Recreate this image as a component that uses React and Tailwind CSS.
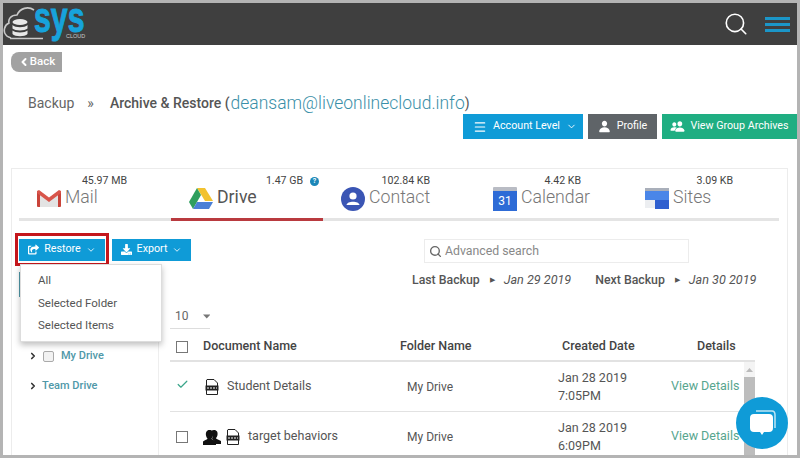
import React from 'react';
import { ChevronDown, ChevronLeft, ChevronRight, Menu, Search, Check } from 'lucide-react';
import { FaShareSquare, FaDownload } from 'react-icons/fa';
import { IoPerson, IoPeople } from 'react-icons/io5';

const font = { fontFamily: 'Roboto, sans-serif' };

const Logo = () => (
  <div className="relative h-full w-[90px]">
    <svg width="40" height="42" viewBox="0 0 40 42" fill="none" className="absolute left-0 top-0">
      <path d="M31 7 C25 3 17 5 14 12 C8 12 5 16 6 20 C1 22 0 29 3 32 C4 34 6 34 8 35" stroke="#c9c9c9" strokeWidth="1.6" />
      <path d="M7 35.500 H40" stroke="#c9c9c9" strokeWidth="1.6" />
      <ellipse cx="17" cy="19" rx="7.500" ry="3" fill="#e8e8e8" />
      <path d="M9.500 22 C12 25 22 25 24.500 22 V25.500 C22 28 12 28 9.500 25.500 Z" fill="#e8e8e8" />
      <path d="M9.500 27.500 C12 30 22 30 24.500 27.500 V31 C22 34 12 34 9.500 31 Z" fill="#e8e8e8" />
    </svg>
    <div className="absolute left-[31px] top-0 origin-left scale-x-[0.72] font-['Liberation_Sans',sans-serif] text-[42px] font-bold leading-[30px] text-[#17a3dc] [-webkit-text-stroke:1px_#17a3dc]">sys</div>
    <div className="absolute left-[63px] top-[30px] font-['Liberation_Sans',sans-serif] text-[5.5px] leading-[6px] text-[#c9c9c9]">CLOUD</div>
  </div>
);

const GmailIcon = () => (
  <svg width="24" height="17" viewBox="0 0 24 17" className="mt-[3px]">
    <path d="M0 1 H3 V17 H1 Q0 17 0 16 Z" fill="#c9433a" />
    <path d="M21 1 H24 V16 Q24 17 23 17 H21 Z" fill="#c9433a" />
    <path d="M3 3 L12 10 L21 3 V17 H3 Z" fill="#e3e3e3" />
    <path d="M0 1 L2 0 L12 7.500 L22 0 L24 1 V3 L12 12 L0 3 Z" fill="#d8554b" />
  </svg>
);

const DriveIcon = () => (
  <svg width="24" height="21" viewBox="0 0 24 21" className="mt-[1px]">
    <path d="M8 0 H16 L24 13 H16 Z" fill="#f2c230" />
    <path d="M8 0 L12 7 L4 21 L0 14 Z" fill="#2f9e5d" />
    <path d="M8 14 H24 L20 21 H4 Z" fill="#4a7fd6" />
  </svg>
);

const ContactIcon = () => (
  <svg width="24" height="24" viewBox="0 0 24 24">
    <circle cx="12" cy="12" r="12" fill="#3a55b4" />
    <circle cx="12" cy="9" r="3.600" fill="#fff" />
    <path d="M5.500 18 C6 13.500 18 13.500 18.500 18 Z" fill="#fff" />
  </svg>
);

const CalendarIcon = () => (
  <div className="flex h-[24px] w-[24px] flex-col">
    <div className="h-[4px] rounded-t-[1px] bg-[#b9bcc4]" />
    <div className="flex flex-1 items-center justify-center bg-[#2e6bd6] text-[12px] leading-none text-white">31</div>
  </div>
);

const SitesIcon = () => (
  <svg width="24" height="21" viewBox="0 0 24 21" className="mt-[1px]">
    <rect width="24" height="3" fill="#a9afba" />
    <rect y="3" width="24" height="9" fill="#4a86e8" />
    <rect x="10" y="12" width="14" height="9" fill="#2f5fcf" />
    <rect y="12" width="10" height="8" fill="#eceef1" />
  </svg>
);

const FileIcon = () => (
  <svg width="14" height="16" viewBox="0 0 14 16" className="shrink-0">
    <path d="M2 .5 H9 L12.500 4 V15.500 H1.500 V1 Z" fill="#fff" stroke="#222" />
    <rect x=".5" y="6.500" width="13" height="5" fill="#222" />
    <path d="M2 9 H12" stroke="#fff" strokeDasharray="2 1" />
  </svg>
);

// two overlapping black silhouettes, the shared-file marker
const SharedIcon = () => (
  <svg width="18" height="16" viewBox="0 0 18 16" className="-ml-[2px] shrink-0">
    <path d="M11 1 C14 1 15 3.500 14.500 6 C14.200 7.500 13.500 8.500 13 9 C13 10 15 10.500 18 12 V15 H13 C12.500 12 10 11 9 10 C10 8 10 3 8 2 C9 1.300 10 1 11 1 Z" fill="#111" />
    <path d="M6.500 1 C9.500 1 10.500 3.500 10 6.500 C9.700 8 9 9 8.500 9.500 C8.500 10.500 11 11 13 12.500 V16 H0 V12.500 C2 11 4.500 10.500 4.500 9.500 C4 9 3.300 8 3 6.500 C2.500 3.500 3.500 1 6.500 1 Z" fill="#111" />
  </svg>
);

const tabs = [
  { name: 'Mail', size: '45.97 MB', icon: <GmailIcon />, pr: 'pr-[44px]' },
  { name: 'Drive', size: '1.47 GB', icon: <DriveIcon />, pr: 'pr-[4px]', active: true },
  { name: 'Contact', size: '102.84 KB', icon: <ContactIcon />, pr: 'pr-[45px]' },
  { name: 'Calendar', size: '4.42 KB', icon: <CalendarIcon />, pr: 'pr-[46px]' },
  { name: 'Sites', size: '3.09 KB', icon: <SitesIcon />, pr: 'pr-[46px]' },
];

const Tab = ({ tab }) => (
  <div className={`flex h-[46px] flex-col border-b-[3px] ${tab.active ? 'border-[#b93a3f]' : 'border-[#e4e4e4]'}`}>
    <div className={`flex h-[12px] items-center justify-end gap-[7px] text-[10.6px] leading-none text-[#444] ${tab.pr}`}>
      <span>{tab.size}</span>
      {tab.active && (
        <span className="flex h-[9px] w-[9px] items-center justify-center rounded-full bg-[#1b87b8] text-[7px] font-bold text-white">?</span>
      )}
    </div>
    <div className="flex items-start gap-[4px] pl-[18px]">
      <div className="flex w-[24px] justify-center">{tab.icon}</div>
      <span className={`text-[17.7px] leading-[20px] ${tab.active ? 'text-[#555]' : 'font-light text-[#777]'}`}>{tab.name}</span>
    </div>
  </div>
);

const rows = [
  { name: 'Student Details', time: '7:05PM', checked: true },
  { name: 'target behaviors', time: '6:09PM', shared: true },
];

const Row = ({ row }) => (
  <div className="flex h-[50px] items-center border-b border-[#e2e2e2] text-[12.5px] text-[#555]">
    <div className="flex w-[24px] justify-center">
      {row.checked
        ? <Check size={13} strokeWidth={2.2} className="-mt-[5px] text-[#3aa58a]" />
        : <div className="h-[12px] w-[12px] border border-[#777] bg-white" />}
    </div>
    <div className="flex w-[213px] items-center gap-[5px] pl-[11px]">
      {row.shared && <SharedIcon />}
      <FileIcon />
      <span className="ml-[3px] whitespace-nowrap">{row.name}</span>
    </div>
    <div className="w-[151px] text-[12px]">My Drive</div>
    <div className="w-[113px] leading-[18px]">
      <div>Jan 28 2019</div>
      <div>{row.time}</div>
    </div>
    <div className="whitespace-nowrap text-[#56a58e]">View Details</div>
  </div>
);

export default function App() {
  return (
    <div style={font} className="relative h-[458px] w-[800px] overflow-hidden border-[3px] border-[#b4b4b4] bg-white">
      <header className="flex h-[42px] items-center justify-between bg-[#3f3f3f] pr-[7px]">
        <Logo />
        <div className="flex items-center gap-[16px]">
          <Search size={26} strokeWidth={1.5} className="text-white" />
          <div className="flex w-[25px] flex-col gap-[3px]">
            <div className="h-[3px] bg-[#1b96c8]" />
            <div className="h-[3px] bg-[#1b96c8]" />
            <div className="h-[3px] bg-[#1b96c8]" />
          </div>
        </div>
      </header>

      <div className="pl-[8px] pt-[7px]">
        <button className="flex h-[20px] w-[51px] items-center justify-center rounded-l-[8px] bg-[#a2a2a2] text-[11.5px] font-medium text-white">
          <ChevronLeft size={12} strokeWidth={4} />Back
        </button>
      </div>

      <div className="flex h-[41px] items-end pl-[25px] text-[14px] leading-[20px]">
        <span className="text-[#666]">Backup</span>
        <span className="ml-[13px] text-[#666]">»</span>
        <span className="ml-[16px] font-medium text-[#555]">Archive &amp; Restore (</span>
        <span className="ml-[1px] text-[17.5px] font-light text-[#3a8fa8]">deansam@liveonlinecloud.info</span>
        <span className="text-[#555]">)</span>
      </div>

      <div className="mt-[1px] flex h-[25px] justify-end gap-[5px] text-[10.7px] text-white">
        <button className="flex w-[120px] items-center justify-center gap-[6px] bg-[#0f9bd7] pl-[4px]">
          <Menu size={14} /> Account Level <ChevronDown size={11} />
        </button>
        <button className="flex w-[69px] items-center justify-center gap-[6px] bg-[#5f6468]">
          <IoPerson size={13} /> Profile
        </button>
        <button className="flex w-[135px] items-center justify-center gap-[5px] bg-[#1fae82]">
          <IoPeople size={15} /> View Group Archives
        </button>
      </div>

      <main className="ml-[8px] mr-[9px] mt-[29px] h-[287px] overflow-hidden border-l border-r border-t border-[#ececec] pl-[7px] pr-[5px] pt-[6px]">
        <nav className="grid grid-cols-[repeat(5,152px)]">
          {tabs.map(t => <Tab key={t.name} tab={t} />)}
        </nav>

        <div className="mt-[12px] flex items-start justify-between">
          <div className="flex items-center gap-[3px]">
            <div className="-ml-[4px] border-[3px] border-[#c4161c] px-[1px] py-[2.500px]">
              <button className="flex h-[22px] w-[86px] items-center justify-center gap-[5px] bg-[#0f9bd7] text-[10.7px] text-white">
                <FaShareSquare size={11} /> Restore <ChevronDown size={10} />
              </button>
            </div>
            <button className="flex h-[22px] w-[79px] items-center justify-center gap-[5px] bg-[#0f9bd7] text-[10.7px] text-white">
              <FaDownload size={11} /> Export <ChevronDown size={10} />
            </button>
          </div>
          <div className="mr-[26px] flex w-[344px] flex-col">
            <div className="ml-[12px] mt-[6px] flex h-[24px] w-[265px] items-center gap-[3px] border border-[#ececec] pl-[4px] text-[12.3px] text-[#888]">
              <Search size={13} strokeWidth={2.500} className="text-[#666]" /> Advanced search
            </div>
            <div className="mt-[8px] flex h-[18px] items-center whitespace-nowrap text-[12.3px] text-[#555]">
              <span className="font-medium">Last Backup</span>
              <span className="ml-[10px] mr-[9px] text-[7px]">▶</span>
              <span className="text-[12.6px] italic">Jan 29 2019</span>
              <span className="ml-[24px] font-medium">Next Backup</span>
              <span className="ml-[10px] mr-[9px] text-[7px]">▶</span>
              <span className="text-[12.6px] italic">Jan 30 2019</span>
            </div>
          </div>
        </div>

        <div className="flex">
          <aside className="h-[170px] w-[140px] shrink-0 border-r border-[#eeeeee] pl-[9px] pt-[60px] text-[11px] font-medium text-[#4f98a8]">
            <div className="flex h-[14px] items-center">
              <ChevronRight size={10} strokeWidth={4} className="text-[#333]" />
              <div className="ml-[5px] h-[11px] w-[11px] rounded-[2px] border border-[#aaa] bg-[#f2f2f2]" />
              <span className="ml-[7px]">My Drive</span>
            </div>
            <div className="mt-[16px] flex h-[14px] items-center">
              <ChevronRight size={10} strokeWidth={4} className="text-[#333]" />
              <span className="ml-[4px]">Team Drive</span>
            </div>
          </aside>

          <section className="w-[596px] shrink-0 pl-[11px]">
            <div className="mt-[18px] flex h-[22px] w-[40px] items-center border-b border-[#ddd] pb-[3px] pl-[5px] text-[12px] text-[#666]">
              10
              <svg width="9" height="5" viewBox="0 0 9 5" className="ml-[14px]"><path d="M0 0 H9 L4.500 5 Z" fill="#777" /></svg>
            </div>
            <div className="flex h-[33px] items-center border-b-2 border-[#e2e2e2] pt-[4px] text-[12.5px] font-medium text-[#444]">
              <div className="flex w-[24px] justify-center">
                <div className="h-[12px] w-[12px] border border-[#777]" />
              </div>
              <div className="w-[206px] pl-[9px]">Document Name</div>
              <div className="w-[162px]">Folder Name</div>
              <div className="w-[135px]">Created Date</div>
              <div>Details</div>
            </div>
            {rows.map(r => <Row key={r.name} row={r} />)}
          </section>
        </div>
      </main>

      <div className="absolute left-[16px] top-[269px] h-[25px] w-[1px] bg-[#4f98a8]" />
      <div className="absolute left-[17px] top-[261px] w-[142px] border border-[#ddd] bg-white py-[4px] text-[11.5px] leading-[22.700px] text-[#555] shadow-[0_3px_6px_rgba(0,0,0,0.25)]">
        <div className="pl-[17px]">All</div>
        <div className="pl-[17px]">Selected Folder</div>
        <div className="pl-[17px]">Selected Items</div>
      </div>

      <div className="absolute left-[741px] top-[359px] h-[93px] w-[11px] bg-[#f4f4f4]">
        <div className="flex h-[15px] items-center justify-center">
          <svg width="7" height="4" viewBox="0 0 7 4"><path d="M0 4 L3.500 0 L7 4 Z" fill="#bbb" /></svg>
        </div>
        <div className="h-[78px] bg-[#bdbdbd]" />
      </div>

      <div className="absolute left-[733px] top-[394px] flex h-[52px] w-[52px] items-center justify-center rounded-full bg-[#0f9bd7]">
        <svg width="30" height="30" viewBox="0 0 30 30">
          <path d="M9 3 H25 Q28 3 28 7 V20" fill="none" stroke="#bfe6f5" strokeWidth="1.500" />
          <path d="M7 6 H22 Q26 6 26 10 V20 Q26 24 22 24 H17 L15 27 L13 24 H7 Q3 24 3 20 V10 Q3 6 7 6 Z" fill="#fff" />
        </svg>
      </div>
    </div>
  );
}
